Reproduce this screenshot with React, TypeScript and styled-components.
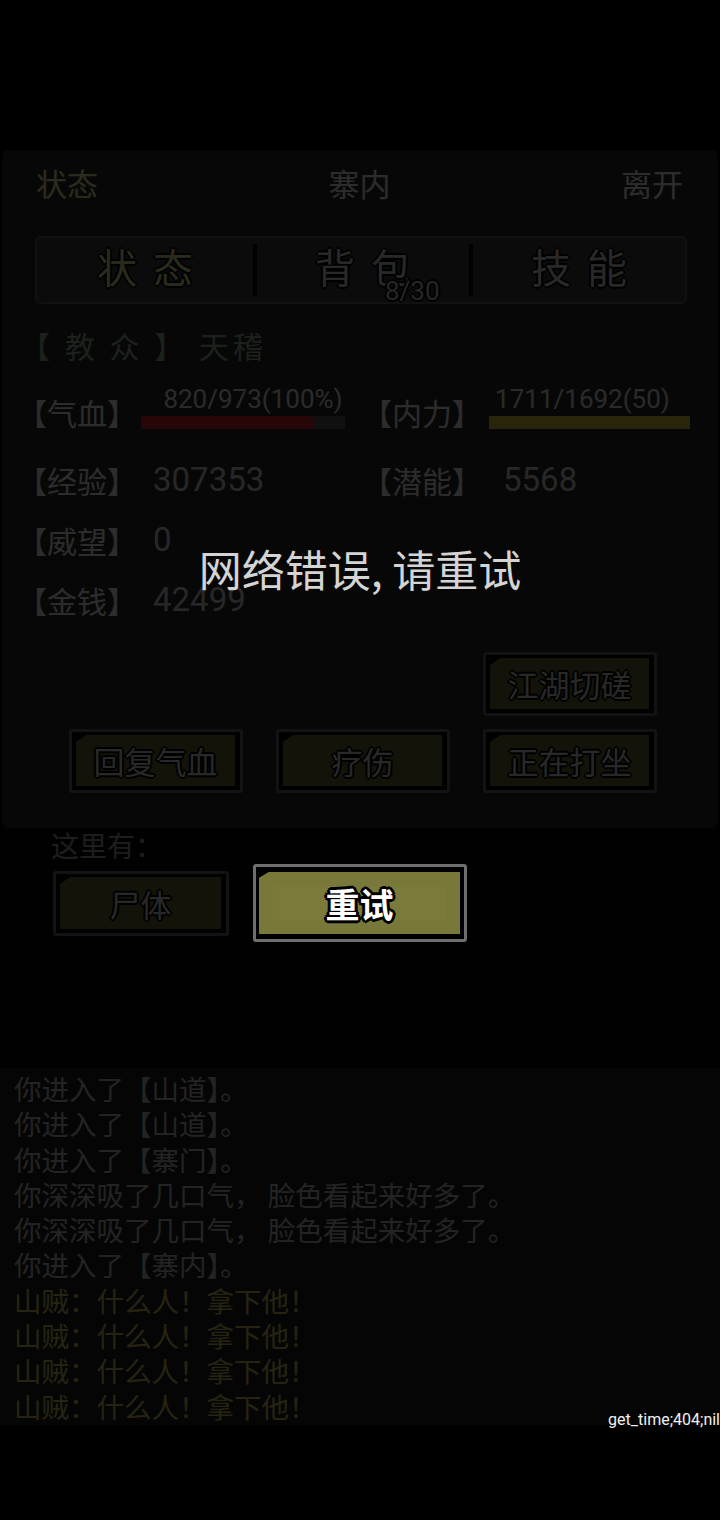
import React from "react";
import styled, { createGlobalStyle } from "styled-components";

const GlobalStyle = createGlobalStyle`
  html, body {
    margin: 0;
    padding: 0;
    background: #000;
  }
  body {
    font-family: "Noto Sans CJK SC", "Noto Sans", sans-serif;
  }
  * {
    box-sizing: border-box;
  }
`;

const Page = styled.div`
  position: relative;
  width: 720px;
  height: 1520px;
  overflow: hidden;
  background: #000;
  padding-top: 150px;
`;

const Panel = styled.div`
  margin: 0 2px;
  height: 678px;
  background: #282828;
  border-radius: 6px;
  padding-top: 1px;
`;

const Header = styled.div`
  display: grid;
  grid-template-columns: 1fr auto 1fr;
  align-items: center;
  height: 62px;
  padding: 0 35px 0 34px;
  font-size: 31px;
  color: #f2f2f2;
`;

const HeaderItem = styled.div<{ $align?: string; $color?: string }>`
  text-align: ${(p) => p.$align || "left"};
  color: ${(p) => p.$color || "#f2f2f2"};
`;

const Tabs = styled.div`
  display: grid;
  grid-template-columns: repeat(3, 1fr);
  margin: 23px 31px 0 33px;
  height: 68px;
  background: #404040;
  border: 2px solid #5e5e5e;
  border-radius: 6px;
`;

const Tab = styled.div<{ $active?: boolean; $first?: boolean }>`
  position: relative;
  display: flex;
  align-items: center;
  justify-content: center;
  margin: 6px 0;
  padding: 0 0 8px 16px;
  border-left: ${(p) => (p.$first ? "none" : "4px solid #000")};
  font-size: 40px;
  line-height: 44px;
  letter-spacing: 16px;
  color: ${(p) => (p.$active ? "#eaea9a" : "#dcdcdc")};
  text-shadow: -2px 0 #000, 2px 0 #000, 0 -2px #000, 0 2px #000;
`;

const Badge = styled.span`
  position: absolute;
  left: 128px;
  top: 32px;
  font-family: Roboto, "Noto Sans", sans-serif;
  font-size: 26px;
  line-height: 30px;
  letter-spacing: 0;
  color: #d0d0d0;
`;

const Member = styled.div`
  margin: 21px 0 0 18px;
  height: 40px;
  line-height: 40px;
  font-size: 30px;
  letter-spacing: 4px;
  color: #98b498;
  white-space: pre;
`;

const Stats = styled.div`
  display: grid;
  grid-template-columns: 124px 221px 127px 1fr;
  grid-template-rows: 68px 60px 60px 60px;
  align-items: start;
  margin-top: 17px;
  padding: 0 28px 0 15px;
`;

const Label = styled.div`
  font-size: 30px;
  line-height: 60px;
  color: #f0f0f0;
  white-space: nowrap;
`;

const Value = styled.div<{ $pad?: number }>`
  font-family: Roboto, "Noto Sans", sans-serif;
  font-size: 33px;
  line-height: 60px;
  padding-left: ${(p) => p.$pad ?? 12}px;
  color: #d6d6d6;
`;

const BarBox = styled.div<{ $w?: number }>`
  display: flex;
  flex-direction: column;
  align-items: center;
  gap: 4px;
  padding-top: 4px;
  width: ${(p) => (p.$w ? `${p.$w}px` : "100%")};
`;

const BarText = styled.div<{ $shift?: number }>`
  font-family: Roboto, "Noto Sans", sans-serif;
  font-size: 26px;
  line-height: 26px;
  color: #e6e6e6;
  white-space: nowrap;
  transform: translateX(${(p) => p.$shift || 0}px);
`;

const Track = styled.div`
  width: 100%;
  height: 13px;
  background: #5a5a5a;
`;

const Fill = styled.div<{ $color: string }>`
  height: 100%;
  background: ${(p) => p.$color};
`;

const Actions = styled.div`
  display: grid;
  grid-template-columns: repeat(3, 174px);
  column-gap: 33px;
  row-gap: 13px;
  margin-top: 22px;
  padding-left: 67px;
`;

const Btn = styled.div<{ $col?: number; $w?: number; $h?: number }>`
  grid-column: ${(p) => p.$col || "auto"};
  width: ${(p) => p.$w || 174}px;
  height: ${(p) => p.$h || 64}px;
  border: 3px solid #6a6a6a;
  border-radius: 3px;
  background: #000;
  padding: 3px 5px 4px 4px;
`;

const BtnFill = styled.div`
  width: 100%;
  height: 100%;
  display: flex;
  align-items: center;
  justify-content: center;
  background: #6a6a32;
  clip-path: polygon(0 7px, 10px 0, 100% 0, 100% 100%, 0 100%);
  font-size: 31px;
  color: #dedede;
  text-shadow: -2px 0 #000, 2px 0 #000, 0 -2px #000, 0 2px #000,
    -1px -1px #000, 1px 1px #000, -1px 1px #000, 1px -1px #000;
`;

const Here = styled.div`
  height: 240px;
  background: #0a0a0a;
  padding: 0 0 0 51px;
`;

const HereTitle = styled.div`
  font-size: 28px;
  line-height: 34px;
  color: #a0a0a0;
`;

const HereList = styled.div`
  margin-top: 9px;
  margin-left: -51px;
  padding-left: 53px;
`;

const Log = styled.div`
  height: 357px;
  background: #1e1e1e;
  padding: 3px 0 0 14px;
`;

const LogLine = styled.div<{ $color?: string }>`
  font-size: 27.5px;
  line-height: 35.3px;
  color: ${(p) => p.$color || "#c0c0c0"};
  white-space: pre;
`;

const Overlay = styled.div`
  position: absolute;
  inset: 0;
  background: rgba(0, 0, 0, 0.82);
  display: flex;
  flex-direction: column;
  align-items: center;
  padding-top: 542px;
`;

const Message = styled.div`
  font-size: 43px;
  line-height: 52px;
  color: #d4d4d4;
  white-space: pre;
`;

const RetryButton = styled.div`
  margin-top: 270px;
  width: 214px;
  height: 78px;
  border: 3px solid #6e6e6e;
  border-radius: 3px;
  background: #000;
  padding: 5px 4px 5px 3px;
  cursor: pointer;
`;

const RetryFill = styled.div`
  width: 100%;
  height: 100%;
  display: flex;
  align-items: center;
  justify-content: center;
  background: #7a7a3c;
  clip-path: polygon(0 6px, 10px 0, 100% 0, 100% 100%, 0 100%);
  box-shadow: inset 0 0 0 14px #78783a;
  font-size: 34px;
  font-weight: 700;
  color: #fff;
  text-shadow: -3px 0 #000, 3px 0 #000, 0 -3px #000, 0 3px #000,
    -2px -2px #000, 2px 2px #000, -2px 2px #000, 2px -2px #000;
`;

const Debug = styled.div`
  position: absolute;
  right: 0;
  top: 1408px;
  font-family: Roboto, "Noto Sans", sans-serif;
  font-size: 16px;
  line-height: 24px;
  color: #f0f0f0;
`;

const logs = [
  { text: "你进入了【山道】。" },
  { text: "你进入了【山道】。" },
  { text: "你进入了【寨门】。" },
  { text: "你深深吸了几口气， 脸色看起来好多了。" },
  { text: "你深深吸了几口气， 脸色看起来好多了。" },
  { text: "你进入了【寨内】。" },
  { text: "山贼：什么人！拿下他！", color: "#d4c260" },
  { text: "山贼：什么人！拿下他！", color: "#d4c260" },
  { text: "山贼：什么人！拿下他！", color: "#d4c260" },
  { text: "山贼：什么人！拿下他！", color: "#d4c260" },
];

export default function App() {
  const hp = { cur: 820, max: 973 };
  return (
    <>
      <GlobalStyle />
      <Page>
        <Panel>
          <Header>
            <HeaderItem $color="#eeeea0">状态</HeaderItem>
            <HeaderItem>寨内</HeaderItem>
            <HeaderItem $align="right">离开</HeaderItem>
          </Header>
          <Tabs>
            <Tab $active $first>
              状态
            </Tab>
            <Tab>
              背包
              <Badge>8/30</Badge>
            </Tab>
            <Tab>技能</Tab>
          </Tabs>
          <Member>【 教 众 】 天稽</Member>
          <Stats>
            <Label>【气血】</Label>
            <BarBox $w={204}>
              <BarText $shift={10}>820/973(100%)</BarText>
              <Track>
                <Fill $color="#d42424" style={{ width: `${(hp.cur / hp.max) * 100}%` }} />
              </Track>
            </BarBox>
            <Label>【内力】</Label>
            <BarBox>
              <BarText $shift={-7}>1711/1692(50)</BarText>
              <Track>
                <Fill $color="#e0cc40" style={{ width: "100%" }} />
              </Track>
            </BarBox>

            <Label>【经验】</Label>
            <Value>307353</Value>
            <Label>【潜能】</Label>
            <Value $pad={14}>5568</Value>

            <Label>【威望】</Label>
            <Value>0</Value>
            <div />
            <div />

            <Label>【金钱】</Label>
            <Value>42499</Value>
            <div />
            <div />
          </Stats>
          <Actions>
            <Btn $col={3}>
              <BtnFill>江湖切磋</BtnFill>
            </Btn>
            <Btn>
              <BtnFill>回复气血</BtnFill>
            </Btn>
            <Btn>
              <BtnFill>疗伤</BtnFill>
            </Btn>
            <Btn>
              <BtnFill>正在打坐</BtnFill>
            </Btn>
          </Actions>
        </Panel>
        <Here>
          <HereTitle>这里有：</HereTitle>
          <HereList>
            <Btn $w={176} $h={65}>
              <BtnFill>尸体</BtnFill>
            </Btn>
          </HereList>
        </Here>
        <Log>
          {logs.map((l, i) => (
            <LogLine key={i} $color={l.color}>
              {l.text}
            </LogLine>
          ))}
        </Log>
        <Overlay>
          <Message>网络错误, 请重试</Message>
          <RetryButton>
            <RetryFill>重试</RetryFill>
          </RetryButton>
        </Overlay>
        <Debug>get_time;404;nil</Debug>
      </Page>
    </>
  );
}
